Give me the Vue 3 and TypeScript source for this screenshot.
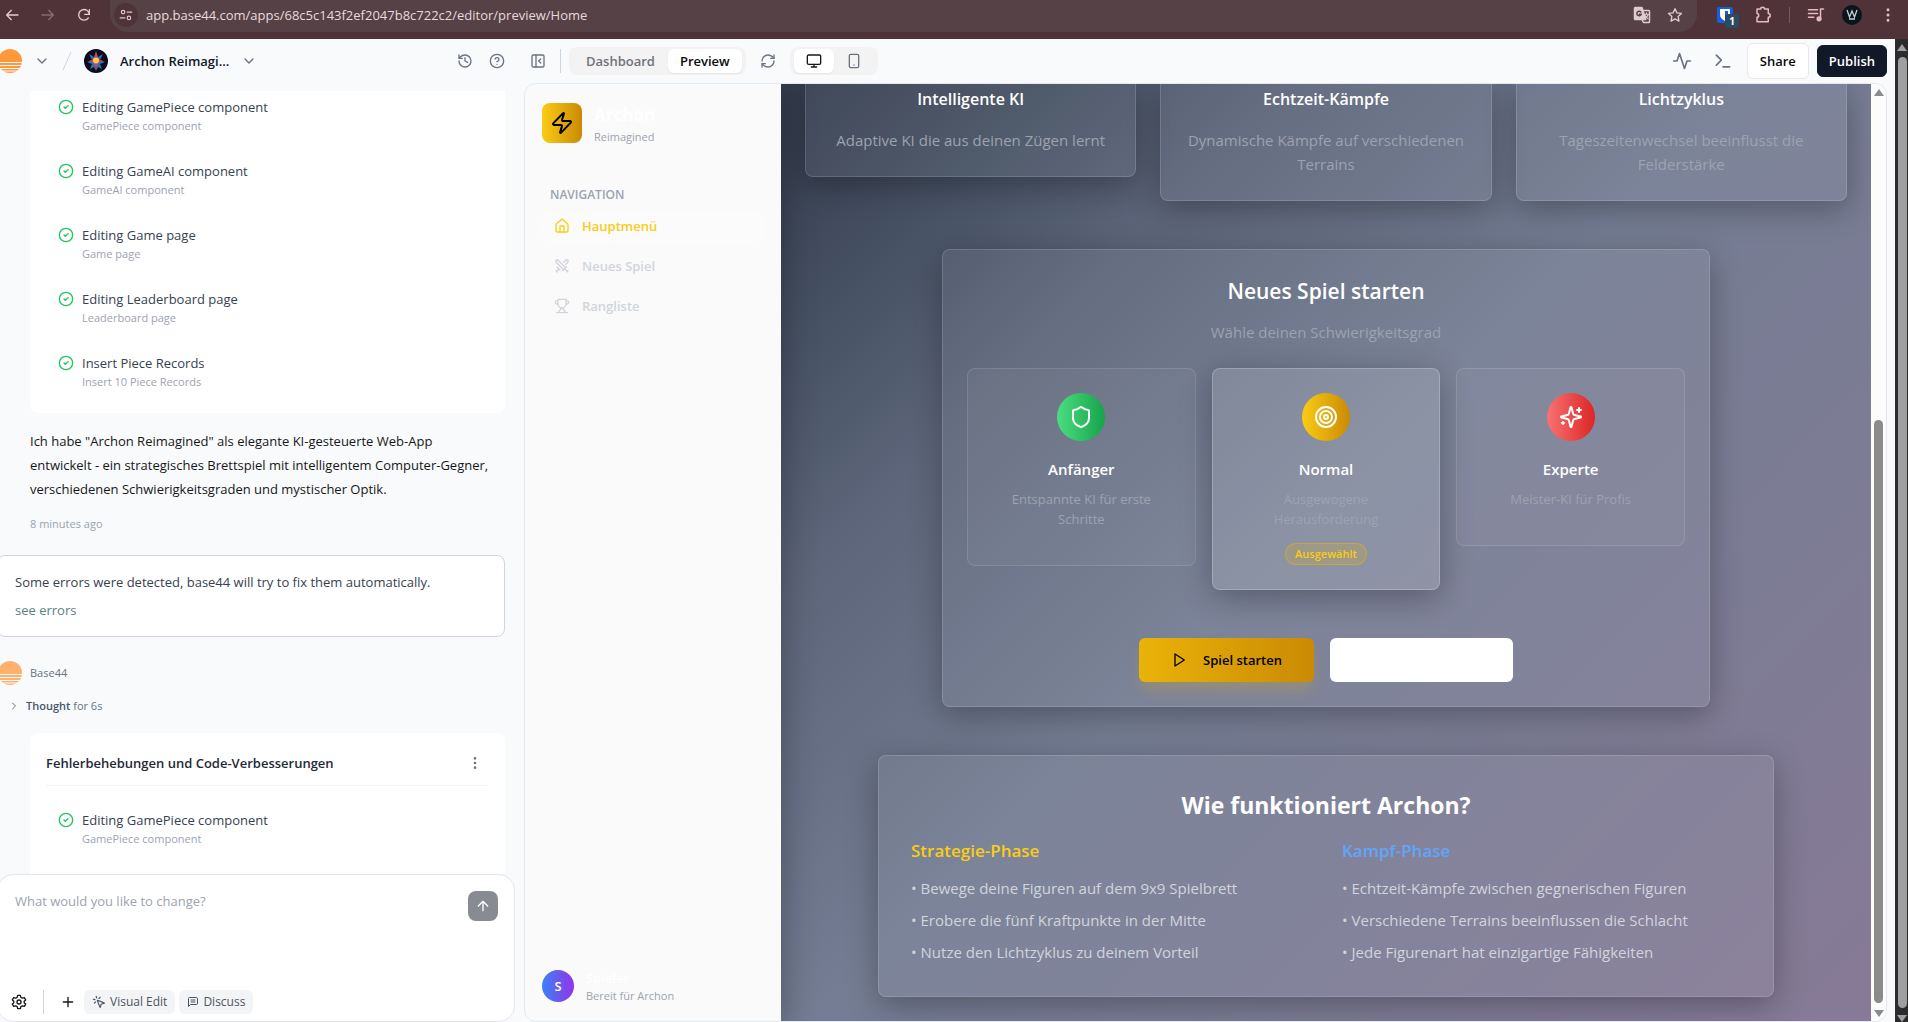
<script setup lang="ts">
import { h, ref } from 'vue'

const shapes: Record<string, string> = {
  back: '<path d="M21 12H4M11 5l-7 7 7 7"/>',
  forward: '<path d="M3 12h17M13 5l7 7-7 7"/>',
  reload: '<path d="M20 11a8 8 0 1 0-1.500 5.500"/><path d="M20 4v7h-7" />',
  tune: '<circle cx="7" cy="7" r="3"/><path d="M14 7h8M2 17h8"/><circle cx="17" cy="17" r="3"/>',
  translate: '<path d="M3 2h9l5 16H3a1 1 0 0 1-1-1V3a1 1 0 0 1 1-1z" fill="currentColor"/><path d="M14 6h7a1 1 0 0 1 1 1v14a1 1 0 0 1-1 1h-7l-2-4"/><path d="M15 11h6M18 9v2M20 11c0 2-2 4-4 5M16 12c0 2 2 3 4 5" stroke-width="1.500"/><path d="M10.500 8A3 3 0 1 0 11 11H8.500" stroke="#564146"/>',
  star: '<path d="m12 2.500 2.900 6.300 6.800.8-5 4.700 1.300 6.800-6-3.400-6 3.400 1.300-6.800-5-4.700 6.800-.8z"/>',
  puzzle: '<path d="M4 4h5c0-3 5-3 5 0h5v6c3.500 0 3.500 5 0 5v6H4v-6c3 0 3-5 0-5z"/>',
  playlist: '<path d="M2 5h12M2 10h12M2 15h7M18 17V4h4"/><circle cx="16" cy="17" r="2.500" fill="currentColor"/>',
  dots: '<circle cx="12" cy="5" r="1"/><circle cx="12" cy="12" r="1"/><circle cx="12" cy="19" r="1"/>',
  down: '<path d="m6 9 6 6 6-6"/>',
  right: '<path d="m9 18 6-6-6-6"/>',
  history: '<path d="M3 12a9 9 0 1 0 9-9 9.750 9.750 0 0 0-6.740 2.740L3 8"/><path d="M3 3v5h5M12 7v5l4 2"/>',
  help: '<circle cx="12" cy="12" r="10"/><path d="M9.090 9a3 3 0 0 1 5.830 1c0 2-3 3-3 3M12 17h.01"/>',
  panel: '<rect width="18" height="18" x="3" y="3" rx="2"/><path d="M9 3v18M16 15l-3-3 3-3"/>',
  refresh: '<path d="M3 12a9 9 0 0 1 9-9 9.750 9.750 0 0 1 6.740 2.740L21 8"/><path d="M21 3v5h-5M21 12a9 9 0 0 1-9 9 9.750 9.750 0 0 1-6.740-2.740L3 16"/><path d="M8 16H3v5"/>',
  monitor: '<rect width="20" height="14" x="2" y="3" rx="2"/><path d="M8 21h8M12 17v4"/>',
  phone: '<rect width="14" height="20" x="5" y="2" rx="2"/><path d="M12 18h.01"/>',
  activity: '<path d="M22 12h-4l-3 9L9 3l-3 9H2"/>',
  terminal: '<path d="m4 17 6-6-6-6M12 19h8"/>',
  zap: '<path d="M4 14a1 1 0 0 1-.78-1.630l9.900-10.200a.5.5 0 0 1 .86.460l-1.920 6.020A1 1 0 0 0 13 10h7a1 1 0 0 1 .78 1.630l-9.900 10.200a.5.5 0 0 1-.86-.46l1.920-6.020A1 1 0 0 0 11 14z"/>',
  home: '<path d="M15 21v-8a1 1 0 0 0-1-1h-4a1 1 0 0 0-1 1v8"/><path d="M3 10a2 2 0 0 1 .709-1.528l7-5.999a2 2 0 0 1 2.582 0l7 5.999A2 2 0 0 1 21 10v9a2 2 0 0 1-2 2H5a2 2 0 0 1-2-2z"/>',
  swords: '<path d="M14.500 17.500 3 6V3h3l11.500 11.500M13 19l6-6M16 16l4 4M19 21l2-2M14.500 6.500 18 3h3v3l-3.500 3.500M5 14l4 4M7 17l-3 3M3 19l2 2"/>',
  trophy: '<path d="M6 9H4.500a2.500 2.500 0 0 1 0-5H6M18 9h1.500a2.500 2.500 0 0 0 0-5H18M4 22h16M10 14.660V17c0 .55-.47.980-.97 1.210C7.850 18.750 7 20.240 7 22M14 14.660V17c0 .55.470.980.970 1.210C16.150 18.750 17 20.240 17 22M18 2H6v7a6 6 0 0 0 12 0V2Z"/>',
  shield: '<path d="M20 13c0 5-3.500 7.500-7.660 8.950a1 1 0 0 1-.67-.01C7.500 20.500 4 18 4 13V6a1 1 0 0 1 1-1c2 0 4.500-1.200 6.240-2.720a1.170 1.170 0 0 1 1.520 0C14.510 3.810 17 5 19 5a1 1 0 0 1 1 1z"/>',
  target: '<circle cx="12" cy="12" r="10"/><circle cx="12" cy="12" r="6"/><circle cx="12" cy="12" r="2"/>',
  sparkles: '<path d="M9.937 15.500A2 2 0 0 0 8.500 14.063l-6.135-1.582a.5.5 0 0 1 0-.962L8.500 9.936A2 2 0 0 0 9.937 8.500l1.582-6.135a.5.5 0 0 1 .963 0L14.063 8.500A2 2 0 0 0 15.500 9.937l6.135 1.581a.5.5 0 0 1 0 .964L15.500 14.063a2 2 0 0 0-1.437 1.437l-1.582 6.135a.5.5 0 0 1-.963 0z"/><path d="M20 3v4M22 5h-4M4 17v2M5 18H3"/>',
  play: '<path d="m6 3 14 9-14 9z"/>',
  check: '<circle cx="12" cy="12" r="10"/><path d="m9 12 2 2 4-4"/>',
  up: '<path d="m5 12 7-7 7 7M12 19V5"/>',
  plus: '<path d="M5 12h14M12 5v14"/>',
  gear: '<path d="M10 2h4l.8 3 2.200 1.300 3-.9 2 3.500-2.200 2.100v2l2.200 2.100-2 3.500-3-.9-2.200 1.300-.8 3h-4l-.8-3L7 17.700l-3 .9-2-3.500L4.200 13v-2L2 8.900l2-3.500 3 .9L9.200 5z"/><circle cx="12" cy="12" r="3"/>',
  pointer: '<path d="M14 4.100 12 6M5.100 8l-2.900-.8M6 12l-1.900 2M7.200 2.200 8 5.100M9.037 9.690a.498.498 0 0 1 .653-.653l11 4.500a.5.5 0 0 1-.074.949l-4.349 1.041a1 1 0 0 0-.740.739l-1.040 4.350a.5.5 0 0 1-.950.074z"/>',
  message: '<path d="M21 15a2 2 0 0 1-2 2H7l-4 4V5a2 2 0 0 1 2-2h14a2 2 0 0 1 2 2zM8 8h8M8 12h8"/>',
}

const Icon = (props: { name: string; size?: number }) =>
  h('svg', {
    viewBox: '0 0 24 24',
    width: props.size ?? 16,
    height: props.size ?? 16,
    fill: 'none',
    stroke: 'currentColor',
    'stroke-width': 2,
    'stroke-linecap': 'round',
    'stroke-linejoin': 'round',
    'aria-hidden': 'true',
    innerHTML: shapes[props.name],
  })
Icon.props = ['name', 'size']

const address = ref('app.base44.com/apps/68c5c143f2ef2047b8c722c2/editor/preview/Home')
const prompt = ref('')
const selected = ref('Normal')

const steps = [
  { title: 'Editing GamePiece component', note: 'GamePiece component' },
  { title: 'Editing GameAI component', note: 'GameAI component' },
  { title: 'Editing Game page', note: 'Game page' },
  { title: 'Editing Leaderboard page', note: 'Leaderboard page' },
  { title: 'Insert Piece Records', note: 'Insert 10 Piece Records' },
]
const fixes = [{ title: 'Editing GamePiece component', note: 'GamePiece component' }]
const nav = [
  { label: 'Hauptmenü', icon: 'home', active: true },
  { label: 'Neues Spiel', icon: 'swords', active: false },
  { label: 'Rangliste', icon: 'trophy', active: false },
]
const features = [
  { title: 'Intelligente KI', text: 'Adaptive KI die aus deinen Zügen lernt' },
  { title: 'Echtzeit-Kämpfe', text: 'Dynamische Kämpfe auf verschiedenen Terrains' },
  { title: 'Lichtzyklus', text: 'Tageszeitenwechsel beeinflusst die Felderstärke' },
]
const levels = [
  { name: 'Anfänger', text: 'Entspannte KI für erste Schritte', icon: 'shield', tone: 'green' },
  { name: 'Normal', text: 'Ausgewogene Herausforderung', icon: 'target', tone: 'gold' },
  { name: 'Experte', text: 'Meister-KI für Profis', icon: 'sparkles', tone: 'red' },
]
const phases = [
  {
    title: 'Strategie-Phase',
    tone: 'yellow',
    points: ['Bewege deine Figuren auf dem 9x9 Spielbrett', 'Erobere die fünf Kraftpunkte in der Mitte', 'Nutze den Lichtzyklus zu deinem Vorteil'],
  },
  {
    title: 'Kampf-Phase',
    tone: 'blue',
    points: ['Echtzeit-Kämpfe zwischen gegnerischen Figuren', 'Verschiedene Terrains beeinflussen die Schlacht', 'Jede Figurenart hat einzigartige Fähigkeiten'],
  },
]
</script>

<template>
  <div class="window">
    <div class="browser">
      <button class="bare" aria-label="Back"><Icon name="back" :size="16" /></button>
      <button class="bare dim" aria-label="Forward"><Icon name="forward" :size="16" /></button>
      <button class="bare" aria-label="Reload"><Icon name="reload" :size="16" /></button>
      <div class="omnibox">
        <span class="site"><Icon name="tune" :size="14" /></span>
        <input v-model="address" class="address" type="text" aria-label="Address" />
        <button class="bare" aria-label="Translate"><Icon name="translate" :size="18" /></button>
        <button class="bare" aria-label="Bookmark"><Icon name="star" :size="16" /></button>
      </div>
      <div class="extensions">
        <button class="bare vault" aria-label="Password vault">
          <svg width="16" height="16" viewBox="0 0 16 16"><rect width="16" height="16" rx="2" fill="#175ddc" /><path d="M3 2h10v6c0 3-3 5-5 6-2-1-5-3-5-6z" fill="#fff" /><path d="M8 4h3v4c0 2-2 3-3 4z" fill="#175ddc" /></svg>
          <span class="count">1</span>
        </button>
        <button class="bare pink" aria-label="Extensions"><Icon name="puzzle" :size="18" /></button>
        <span class="rule"></span>
        <button class="bare pink" aria-label="Media"><Icon name="playlist" :size="18" /></button>
        <svg class="profile" width="20" height="20" viewBox="0 0 20 20"><circle cx="10" cy="10" r="10" fill="#0b141b" /><path d="M5 5l2.500 7L10 6l2.500 6L15 5M7 14h6" fill="none" stroke="#c9d2d6" stroke-width="1.300" /></svg>
        <button class="bare pink" aria-label="Menu"><Icon name="dots" :size="18" /></button>
      </div>
    </div>

    <div class="stage">
      <div class="app">
        <header class="topbar">
          <div class="top-left">
            <svg class="sun" width="24" height="24" viewBox="0 0 24 24"><circle cx="12" cy="12" r="12" fill="#ff983b" /><path d="M0 13.500h24M0 16.500h24M0 19.500h24M0 22h24" stroke="#f8fafc" stroke-width="1" /></svg>
            <button class="bare" aria-label="Workspace"><Icon name="down" /></button>
            <svg width="10" height="20" viewBox="0 0 10 20"><path d="M9 1 1 19" stroke="#cbd5e1" /></svg>
            <svg width="24" height="24" viewBox="0 0 24 24">
              <circle cx="12" cy="12" r="12" fill="#0b0b1d" />
              <path d="m12 2 2 6 5-3-3 6 5 2-5 2 2 5-4-2-2 4-2-4-4 2 2-5-5-2 5-2-3-6 5 3z" fill="#2872b8" />
              <path d="m12 3 2.500 7 4.500 2-5 2-2 6-2-6-5-2 4.500-2z" fill="#dc3b3b" />
              <circle cx="12" cy="11.500" r="3" fill="#ffc861" />
            </svg>
            <span class="project">Archon Reimagi...</span>
            <button class="bare" aria-label="Project menu"><Icon name="down" /></button>
            <div class="tools">
              <button class="bare" aria-label="History"><Icon name="history" /></button>
              <button class="bare" aria-label="Help"><Icon name="help" /></button>
            </div>
          </div>
          <div class="top-right">
            <button class="bare" aria-label="Close panel"><Icon name="panel" /></button>
            <span class="line"></span>
            <div class="tabs">
              <button class="tab">Dashboard</button>
              <button class="tab on">Preview</button>
            </div>
            <button class="bare refresh" aria-label="Refresh"><Icon name="refresh" /></button>
            <div class="tabs devices">
              <button class="device on" aria-label="Desktop"><Icon name="monitor" /></button>
              <button class="device" aria-label="Mobile"><Icon name="phone" /></button>
            </div>
            <div class="actions">
              <button class="bare" aria-label="Activity"><Icon name="activity" :size="20" /></button>
              <button class="bare" aria-label="Console"><Icon name="terminal" :size="20" /></button>
              <div class="pair">
                <button class="share">Share</button>
                <button class="publish">Publish</button>
              </div>
            </div>
          </div>
        </header>

        <div class="work">
          <section class="chat">
            <div class="thread">
              <ul class="card first">
                <li v-for="s in steps" :key="s.title" class="step">
                  <Icon name="check" class="ok" />
                  <div>
                    <p class="step-title">{{ s.title }}</p>
                    <p class="step-note">{{ s.note }}</p>
                  </div>
                </li>
              </ul>
              <p class="reply">Ich habe "Archon Reimagined" als elegante KI-gesteuerte Web-App entwickelt - ein strategisches Brettspiel mit intelligentem Computer-Gegner, verschiedenen Schwierigkeitsgraden und mystischer Optik.</p>
              <p class="time">8 minutes ago</p>
              <div class="errors">
                <p>Some errors were detected, base44 will try to fix them automatically.</p>
                <a href="#">see errors</a>
              </div>
              <div class="author">
                <svg class="sun" width="24" height="24" viewBox="0 0 24 24"><circle cx="12" cy="12" r="12" fill="#ffb06a" /><path d="M0 13.500h24M0 16.500h24M0 19.500h24M0 22h24" stroke="#f8fafc" stroke-width="1" /></svg>
                <span>Base44</span>
              </div>
              <button class="bare thought"><Icon name="right" :size="12" /><span><b>Thought</b> for 6s</span></button>
              <div class="card second">
                <div class="card-head">
                  <h2>Fehlerbehebungen und Code-Verbesserungen</h2>
                  <button class="bare" aria-label="More"><Icon name="dots" /></button>
                </div>
                <ul>
                  <li v-for="s in fixes" :key="s.title" class="step">
                    <Icon name="check" class="ok" />
                    <div>
                      <p class="step-title">{{ s.title }}</p>
                      <p class="step-note">{{ s.note }}</p>
                    </div>
                  </li>
                </ul>
              </div>
            </div>
            <form class="composer" @submit.prevent>
              <div class="entry">
                <textarea v-model="prompt" aria-label="What would you like to change?" placeholder="What would you like to change?"></textarea>
                <button class="send" aria-label="Send"><Icon name="up" /></button>
              </div>
              <div class="composer-tools">
                <button type="button" class="bare" aria-label="Settings"><Icon name="gear" /></button>
                <span class="line"></span>
                <button type="button" class="bare" aria-label="Add"><Icon name="plus" /></button>
                <div class="chips">
                  <button type="button" class="chip"><Icon name="pointer" :size="14" />Visual Edit</button>
                  <button type="button" class="chip"><Icon name="message" :size="12" />Discuss</button>
                </div>
              </div>
            </form>
          </section>

          <section class="frame">
            <aside class="side">
              <div class="brand">
                <span class="bolt"><Icon name="zap" :size="24" /></span>
                <div>
                  <p class="brand-name">Archon</p>
                  <p class="small">Reimagined</p>
                </div>
              </div>
              <p class="nav-title">NAVIGATION</p>
              <nav>
                <a v-for="n in nav" :key="n.label" href="#" :class="{ active: n.active }"><Icon :name="n.icon" />{{ n.label }}</a>
              </nav>
              <div class="player">
                <span class="initial">S</span>
                <div>
                  <p class="player-name">Spieler</p>
                  <p class="small">Bereit für Archon</p>
                </div>
              </div>
            </aside>

            <main>
              <div class="features">
                <article v-for="f in features" :key="f.title" class="glass feature">
                  <h3>{{ f.title }}</h3>
                  <p>{{ f.text }}</p>
                </article>
              </div>

              <section class="glass setup">
                <h2>Neues Spiel starten</h2>
                <p class="lead">Wähle deinen Schwierigkeitsgrad</p>
                <div class="levels">
                  <button v-for="l in levels" :key="l.name" class="level" :class="{ chosen: l.name === selected }" :aria-pressed="l.name === selected" @click="selected = l.name">
                    <span class="disc" :class="l.tone"><Icon :name="l.icon" :size="24" /></span>
                    <span class="level-name">{{ l.name }}</span>
                    <span class="level-text">{{ l.text }}</span>
                    <span v-if="l.name === selected" class="badge">Ausgewählt</span>
                  </button>
                </div>
                <div class="launch">
                  <button class="start"><Icon name="play" />Spiel starten</button>
                  <button class="blank" aria-label="Rangliste"></button>
                </div>
              </section>

              <section class="glass guide">
                <h2>Wie funktioniert Archon?</h2>
                <div class="phases">
                  <div v-for="p in phases" :key="p.title">
                    <h3 :class="p.tone">{{ p.title }}</h3>
                    <ul>
                      <li v-for="t in p.points" :key="t">• {{ t }}</li>
                    </ul>
                  </div>
                </div>
              </section>
            </main>

            <div class="track light">
              <span class="arrow-up"></span>
              <span class="before"></span>
              <span class="thumb"></span>
              <span class="arrow-down"></span>
            </div>
          </section>
        </div>
      </div>

      <div class="track dark">
        <span class="arrow-up"></span>
        <span class="thumb"></span>
        <span class="arrow-down"></span>
      </div>
    </div>
  </div>
</template>

<style>
body {
  margin: 0;
}
</style>

<style scoped>
* {
  box-sizing: border-box;
}
.window {
  height: 100vh;
  display: flex;
  flex-direction: column;
  overflow: hidden;
  font-family: "Open Sans", "Noto Sans", sans-serif;
  font-size: 13px;
  line-height: 20px;
  color: #0f172a;
  background: #f8fafc;
}
p, h2, h3, ul {
  margin: 0;
  padding: 0;
  list-style: none;
}
button, input, textarea {
  font: inherit;
  color: inherit;
}
button {
  cursor: pointer;
}
svg {
  display: block;
  flex: none;
}
.bare {
  display: flex;
  align-items: center;
  padding: 0;
  border: 0;
  background: none;
}

/* browser bar */
.browser {
  flex: none;
  height: 39px;
  padding: 0 11px 10px 4px;
  display: flex;
  align-items: center;
  gap: 20px;
  color: #e9c9cf;
  background: #4f3338;
}
.browser .dim {
  color: #8a6b70;
}
.omnibox {
  flex: 1;
  height: 38px;
  margin: -4px 0 0 -2px;
  padding: 4px 14px 0 4px;
  display: flex;
  align-items: center;
  gap: 16px;
  border-radius: 0 0 18px 18px;
  color: #dccccf;
  background: #564146;
}
.site {
  width: 24px;
  height: 24px;
  display: grid;
  place-items: center;
  border-radius: 50%;
  background: #4f3338;
}
.address {
  flex: 1;
  min-width: 0;
  margin-left: -8px;
  padding: 0;
  border: 0;
  outline: 0;
  background: none;
  font-size: 13px;
  color: #e6dadc;
}
.extensions {
  display: flex;
  align-items: center;
  gap: 17px;
}
.vault {
  position: relative;
  margin-right: 4px;
}
.count {
  position: absolute;
  left: 8px;
  top: 7px;
  width: 14px;
  height: 14px;
  border-radius: 3px;
  background: #2b4b5e;
  color: #fff;
  font-size: 10px;
  line-height: 14px;
  font-weight: 700;
}
.pink {
  color: #e7b9c1;
}
.rule {
  width: 1px;
  height: 16px;
  background: #7b585e;
}

/* app header */
.stage {
  flex: 1;
  min-height: 0;
  display: flex;
}
.app {
  flex: 1;
  min-width: 0;
  display: flex;
  flex-direction: column;
}
.topbar {
  flex: none;
  height: 44px;
  display: flex;
  align-items: center;
  color: #6b7280;
}
.top-left {
  flex: none;
  width: 524px;
  padding-right: 19px;
  display: flex;
  align-items: center;
  gap: 12px;
}
.sun {
  margin-left: -2px;
}
.project {
  color: #111827;
  font-weight: 600;
}
.tools {
  margin-left: auto;
  display: flex;
  gap: 16px;
}
.top-right {
  flex: 1;
  padding: 0 8px 0 6px;
  display: flex;
  align-items: center;
}
.line {
  width: 1px;
  height: 24px;
  background: #d1d5db;
}
.top-right > .line {
  margin: 0 8px 0 14px;
}
.tabs {
  height: 28px;
  padding: 2px 4px;
  display: flex;
  border-radius: 8px;
  background: #f3f3f4;
}
.tab {
  padding: 0 13px;
  border: 0;
  border-radius: 6px;
  background: none;
  font-weight: 600;
  color: #71717a;
}
.tab.on {
  padding: 0 12px;
  color: #09090b;
}
.tab.on, .device.on {
  background: #fff;
  box-shadow: 0 1px 2px rgba(0, 0, 0, 0.06);
}
.refresh {
  margin: 0 14px;
}
.device {
  width: 40px;
  padding: 0;
  display: grid;
  place-items: center;
  border: 0;
  border-radius: 6px;
  background: none;
}
.device.on {
  color: #18181b;
}
.actions {
  margin-left: auto;
  display: flex;
  align-items: center;
  gap: 21px;
}
.pair {
  margin-left: -7px;
  display: flex;
  align-items: center;
  gap: 8px;
}
.share, .publish {
  height: 36px;
  padding: 0 12px;
  border: 1px solid #e5e7eb;
  border-radius: 6px;
  background: #fff;
  font-weight: 600;
  color: #0a0a0a;
}
.publish {
  height: 32px;
  padding: 0 11px;
  border-color: #111827;
  background: #111827;
  color: #fff;
}

/* chat */
.work {
  flex: 1;
  min-height: 0;
  display: flex;
}
.chat {
  flex: none;
  width: 524px;
  display: flex;
  flex-direction: column;
}
.thread {
  flex: 1;
  min-height: 0;
  padding: 8px 19px 0 0;
  overflow: hidden;
}
.card {
  margin-left: 30px;
  background: #fff;
}
.card.first {
  padding: 6px 28px 22px;
  border-radius: 0 0 8px 8px;
}
.step {
  display: flex;
  gap: 8px;
}
.step + .step {
  margin-top: 26px;
}
.ok {
  margin-top: 2px;
  color: #22c55e;
}
.step-title {
  color: #374151;
}
.step-note {
  font-size: 11px;
  line-height: 18px;
  color: #9ca3af;
}
.reply {
  margin: 16px 11px 0 30px;
  line-height: 24px;
  color: #171717;
}
.time {
  margin: 13px 0 0 30px;
  font-size: 11px;
  color: #9ca3af;
}
.errors {
  margin: 21px 0 0 -3px;
  padding: 16px 17px;
  border: 1px solid #d1d5db;
  border-radius: 8px;
  background: #fff;
  color: #374151;
}
.errors a {
  display: block;
  margin-top: 8px;
  color: #578282;
  text-decoration: none;
}
.author {
  margin-top: 24px;
  display: flex;
  align-items: center;
  gap: 8px;
  font-size: 11px;
  color: #6b7280;
}
.thought {
  margin: 11px 0 0 8px;
  gap: 6px;
  font-size: 11px;
  color: #64748b;
}
.thought b {
  font-weight: 600;
  color: #475569;
}
.card.second {
  margin-top: 17px;
  padding: 16px 16px 40px;
  border-radius: 8px 8px 0 0;
}
.card-head {
  padding: 4px 6px 12px 0;
  display: flex;
  align-items: center;
  justify-content: space-between;
  border-bottom: 1px solid #f3f4f6;
}
.card-head .bare {
  color: #6b7280;
}
.card-head h2 {
  font-size: 13px;
  line-height: 20px;
  font-weight: 600;
  color: #1f2937;
}
.card.second ul {
  padding: 24px 12px 0;
}
.composer {
  flex: none;
  height: 148px;
  margin: 0 9px 0 -3px;
  padding: 16px 16px 7px 17px;
  display: flex;
  flex-direction: column;
  border: 1px solid #e2e5ea;
  border-radius: 16px;
  background: #fff;
}
.entry {
  flex: 1;
  display: flex;
  align-items: flex-start;
}
textarea {
  flex: 1;
  height: 80px;
  padding: 0;
  border: 0;
  outline: 0;
  resize: none;
  background: none;
}
textarea::placeholder {
  color: #9ca3af;
}
.send {
  width: 30px;
  height: 30px;
  padding: 0;
  display: grid;
  place-items: center;
  border: 0;
  border-radius: 8px;
  background: #888b92;
  color: #fff;
}
.composer-tools {
  margin-left: -4px;
  display: flex;
  align-items: center;
  gap: 16px;
  color: #18181b;
}
.chips {
  margin-left: -8px;
  display: flex;
  gap: 4px;
}
.chip {
  height: 24px;
  padding: 0 8px;
  display: flex;
  align-items: center;
  gap: 4px;
  border: 0;
  border-radius: 6px;
  background: #f3f4f6;
  font-size: 12px;
  color: #4b5563;
}

/* preview */
.frame {
  flex: 1;
  min-width: 0;
  margin: 0 8px 0 0;
  display: flex;
  overflow: hidden;
  border: 1px solid #e2e8f0;
  border-radius: 12px;
}
.side {
  position: relative;
  z-index: 1;
  flex: none;
  width: 256px;
  padding: 17px;
  display: flex;
  flex-direction: column;
  background: #fafafa;
  box-shadow: 0 8px 32px rgba(0, 0, 0, 0.3);
}
.brand {
  display: flex;
  align-items: center;
  gap: 12px;
}
.bolt {
  width: 40px;
  height: 40px;
  display: grid;
  place-items: center;
  border-radius: 8px;
  color: #000;
  background: linear-gradient(90deg, #facc15, #ca8a04);
}
.brand-name {
  font-size: 17px;
  line-height: 28px;
  font-weight: 700;
  color: #fff;
}
.small {
  font-size: 11px;
  line-height: 16px;
  color: #9ca3af;
}
.nav-title {
  padding: 40px 8px 5px;
  font-size: 12px;
  line-height: 20px;
  font-weight: 600;
  color: #9ca3af;
}
nav {
  display: flex;
  flex-direction: column;
  gap: 8px;
}
nav a {
  height: 32px;
  padding: 0 12px;
  display: flex;
  align-items: center;
  gap: 12px;
  border-radius: 12px;
  font-weight: 600;
  color: #d1d5db;
  text-decoration: none;
}
nav .active {
  color: #facc15;
  background: #fbfbfb;
}
.player {
  margin-top: auto;
  display: flex;
  align-items: center;
  gap: 12px;
}
.initial {
  width: 32px;
  height: 32px;
  display: grid;
  place-items: center;
  border-radius: 50%;
  color: #fff;
  font-weight: 600;
  background: linear-gradient(90deg, #3b82f6, #9333ea);
}
.player-name {
  font-weight: 600;
  color: #fff;
}
main {
  flex: 1;
  min-width: 0;
  padding: 0 24px 23px;
  overflow: hidden;
  background: linear-gradient(135deg, #343c4d 0%, #475264 14%, #5c6579 25%, #747d93 48%, #7d7c95 72%, #877a96 100%);
}
.glass {
  border: 1px solid rgba(255, 255, 255, 0.15);
  border-radius: 8px;
  background: rgba(255, 255, 255, 0.06);
  box-shadow: 0 8px 32px rgba(0, 0, 0, 0.3);
}
.features {
  display: grid;
  grid-template-columns: repeat(3, 1fr);
  align-items: start;
  gap: 24px;
}
.feature {
  padding: 0 24px 24px;
  border-top: 0;
  border-radius: 0 0 8px 8px;
  text-align: center;
}
.feature h3 {
  font-size: 16px;
  line-height: 30px;
  font-weight: 600;
  color: #fff;
}
.feature p {
  margin-top: 14px;
  font-size: 15px;
  line-height: 24px;
  color: #9ca3af;
}
.setup {
  max-width: 768px;
  margin: 48px auto 0;
  padding: 24px;
  text-align: center;
}
.setup h2 {
  font-size: 21px;
  line-height: 34px;
  font-weight: 600;
  color: #fff;
}
.lead {
  margin-top: 12px;
  font-size: 15px;
  line-height: 24px;
  color: #9ca3af;
}
.levels {
  margin-top: 24px;
  display: grid;
  grid-template-columns: repeat(3, 1fr);
  align-items: start;
  gap: 16px;
}
.level {
  padding: 24px;
  display: flex;
  flex-direction: column;
  align-items: center;
  border: 1px solid rgba(255, 255, 255, 0.12);
  border-radius: 8px;
  background: rgba(255, 255, 255, 0.04);
}
.level.chosen {
  border-color: rgba(255, 255, 255, 0.22);
  background: rgba(255, 255, 255, 0.12);
  box-shadow: 0 8px 32px rgba(0, 0, 0, 0.3);
}
.disc {
  width: 48px;
  height: 48px;
  display: grid;
  place-items: center;
  border-radius: 50%;
  color: #fff;
}
.green {
  background: linear-gradient(90deg, #4ade80, #16a34a);
}
.gold {
  background: linear-gradient(90deg, #facc15, #ca8a04);
}
.red {
  background: linear-gradient(90deg, #f87171, #dc2626);
}
.level-name {
  margin-top: 16px;
  font-size: 15px;
  line-height: 24px;
  font-weight: 600;
  color: #fff;
}
.level-text {
  margin: 8px 0 12px;
  color: #9ca3af;
}
.badge {
  margin-top: 2px;
  padding: 0 9px;
  border: 1px solid rgba(234, 179, 8, 0.5);
  border-radius: 12px;
  background: rgba(234, 179, 8, 0.2);
  font-size: 11px;
  font-weight: 600;
  color: #facc15;
}
.launch {
  margin-top: 48px;
  display: flex;
  justify-content: center;
  gap: 16px;
}
.start {
  width: 175px;
  height: 44px;
  display: flex;
  align-items: center;
  justify-content: center;
  gap: 16px;
  border: 0;
  border-radius: 6px;
  background: linear-gradient(90deg, #eab308, #ca8a04);
  box-shadow: 0 10px 15px -3px rgba(234, 179, 8, 0.25);
  font-weight: 600;
  color: #000;
}
.blank {
  width: 183px;
  height: 44px;
  border: 0;
  border-radius: 6px;
  background: #fff;
}
.guide {
  max-width: 896px;
  margin: 48px auto 0;
  padding: 32px;
}
.guide h2 {
  font-size: 23px;
  line-height: 34px;
  font-weight: 700;
  text-align: center;
  color: #fff;
}
.phases {
  margin-top: 15px;
  display: grid;
  grid-template-columns: 1fr 1fr;
  gap: 32px;
}
.phases h3 {
  font-size: 17px;
  line-height: 28px;
  font-weight: 600;
}
.yellow {
  color: #facc15;
}
.blue {
  color: #60a5fa;
}
.phases ul {
  margin-top: 11px;
  display: flex;
  flex-direction: column;
  gap: 8px;
  font-size: 15px;
  line-height: 24px;
  color: #d1d5db;
}

/* scrollbars */
.track {
  flex: none;
  display: flex;
  flex-direction: column;
  align-items: center;
}
.track.light {
  width: 15px;
  padding: 5px 0 4px;
  background: #fcfcfc;
  color: #8b8b8b;
}
.track.dark {
  width: 13px;
  padding: 5px 0 0 1px;
  background: #2c2c2c;
  color: #9f9f9f;
}
.arrow-up {
  border: 5px solid transparent;
  border-top: 0;
  border-bottom: 7px solid currentColor;
}
.arrow-down {
  border: 5px solid transparent;
  border-bottom: 0;
  border-top: 7px solid currentColor;
}
.thumb {
  flex: 583;
  width: 9px;
  margin: 6px 0 7px;
  border-radius: 5px;
  background: currentColor;
}
.light .thumb {
  margin-top: 0;
}
.before {
  flex: 324;
}
</style>
